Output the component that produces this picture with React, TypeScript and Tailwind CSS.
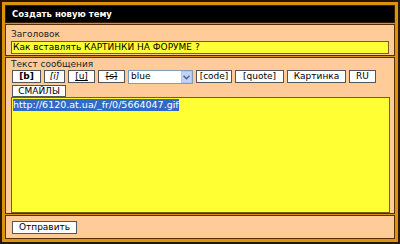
import React from "react";

const font = { fontFamily: '"DejaVu Sans", Verdana, sans-serif' };

function Btn({ children, className = "", w, h = "h-[13px]" }: { children: React.ReactNode; className?: string; w: string; h?: string }) {
  return (
    <div
      className={`${h} ${w} border border-[#555] bg-white flex items-center justify-center text-[9px] leading-none text-black ${className}`}
    >
      {children}
    </div>
  );
}

export default function App() {
  return (
    <div style={font} className="w-[400px] h-[244px] bg-[#2a1500] p-[2px]">
      <div className="w-full h-full bg-[#d8940f] p-[3px]">
        <div className="w-full h-full flex flex-col gap-[1px]">
          <div className="h-[18px] bg-black border border-[#3a1d00] flex items-center pl-[6px] text-white text-[8.5px] font-bold">
            Создать новую тему
          </div>
          <div className="h-[32px] bg-[#ffcc99] border border-[#5a2d00] px-[5px] pt-[4px] flex flex-col">
            <div className="text-[9px] leading-[11px] text-[#222]">Заголовок</div>
            <div className="mt-[1px] h-[13px] w-[378px] bg-[#ffff33] border border-[#7a5a20] flex items-center pl-[1px] text-[9px] text-black leading-none">
              Как вставлять КАРТИНКИ НА ФОРУМЕ ?
            </div>
          </div>
          <div className="h-[157px] bg-[#ffcc99] border border-[#5a2d00] px-[5px] pt-[1px] flex flex-col">
            <div className="text-[9px] leading-[11px] text-[#222]">Текст сообщения</div>
            <div className="flex gap-[3px] pl-[1px]">
              <Btn w="w-[29px]" className="font-bold">[b]</Btn>
              <Btn w="w-[21px]" className="italic">[i]</Btn>
              <Btn w="w-[27px]" className="underline">[u]</Btn>
              <Btn w="w-[27px]" className="line-through">[s]</Btn>
              <div className="h-[14px] w-[65px] border border-[#7f9db9] bg-white flex items-center justify-between text-[9px] text-black pl-[2px]">
                <span>blue</span>
                <div className="w-[11px] h-[12px] bg-[#c1d3fb] border border-[#b2c6f0] flex items-center justify-center">
                  <svg width="7" height="5" viewBox="0 0 7 5">
                    <path d="M0.5 0.8 L3.5 3.8 L6.5 0.8" fill="none" stroke="#4d6185" strokeWidth="1.4" />
                  </svg>
                </div>
              </div>
              <Btn w="w-[36px]">[code]</Btn>
              <Btn w="w-[49px]">[quote]</Btn>
              <Btn w="w-[59px]">Картинка</Btn>
              <Btn w="w-[27px]">RU</Btn>
            </div>
            <div className="flex mt-[1px] pl-[1px]">
              <Btn w="w-[54px]" h="h-[12px]">СМАЙЛЫ</Btn>
            </div>
            <div className="h-[116px] w-[379px] bg-[#ffff33] border border-[#7a5a20] pl-[1px] text-[9.5px] leading-[13px]">
              <span className="bg-[#316ac5] text-white pb-[1px]">http://6120.at.ua/_fr/0/5664047.gif</span>
            </div>
          </div>
          <div className="flex-1 bg-[#ffcc99] border border-[#5a2d00] px-[6px] flex items-center">
            <Btn w="w-[65px]" className="text-[#222]">Отправить</Btn>
          </div>
        </div>
      </div>
    </div>
  );
}
